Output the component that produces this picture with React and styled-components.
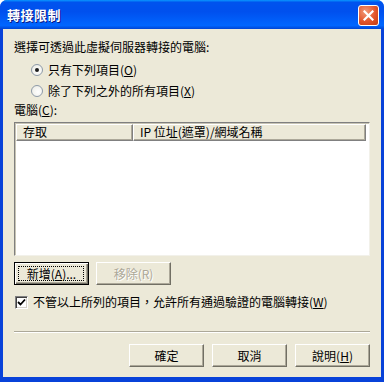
import React from 'react';
import styled, { createGlobalStyle } from 'styled-components';

const GlobalStyle = createGlobalStyle`
  html, body {
    margin: 0;
    padding: 0;
    background: #ffffff;
  }
`;

const cjk = `"Noto Sans CJK TC", "Noto Sans", sans-serif`;

const Window = styled.div`
  width: 384px;
  height: 382px;
  box-sizing: border-box;
  display: flex;
  flex-direction: column;
  background: linear-gradient(to right, #0831d9 0, #166aee 2px, #0a5ae8 3px);
  border-radius: 7px 7px 0 0;
  overflow: hidden;
  font-family: ${cjk};
  font-size: 12px;
  color: #000;
`;

const TitleBar = styled.div`
  height: 29px;
  flex: none;
  display: flex;
  align-items: center;
  padding: 0 5px 0 7px;
  background: linear-gradient(
    to bottom,
    #0997ff 0,
    #0053ee 8%,
    #0050ee 40%,
    #0066ff 88%,
    #0045d3 100%
  );
`;

const Title = styled.div`
  flex: 1;
  color: #fff;
  font-weight: bold;
  font-size: 13px;
  letter-spacing: 0.5px;
  text-shadow: 1px 1px 0 #0a1883;
`;

const CloseButton = styled.div`
  width: 21px;
  height: 21px;
  box-sizing: border-box;
  border: 1px solid #fff;
  border-radius: 3px;
  background: radial-gradient(circle at 35% 30%, #f29a7a 0, #e2552b 55%, #c23c12 100%);
  display: flex;
  align-items: center;
  justify-content: center;
  margin-top: 1px;
`;

const Frame = styled.div`
  flex: 1;
  display: flex;
  padding: 0 3px 5px 3px;
  background: #0842d9;
`;

const Client = styled.div`
  flex: 1;
  background: #ece9d8;
  display: flex;
  flex-direction: column;
  padding: 10px 11px 0 11px;
`;

const Line = styled.div`
  height: 16px;
  line-height: 16px;
  display: flex;
  align-items: center;
  margin-top: ${(p) => p.$mt || 0}px;
  margin-left: ${(p) => p.$ml || 0}px;
  white-space: nowrap;
`;

const Radio = styled.span`
  width: 12px;
  height: 12px;
  box-sizing: border-box;
  border-radius: 50%;
  border: 1px solid #8e9aa8;
  background: radial-gradient(circle at 60% 60%, #ffffff 0, #e9e9e1 100%);
  display: inline-flex;
  align-items: center;
  justify-content: center;
  margin-right: 5px;
  &::after {
    content: '';
    width: 4px;
    height: 4px;
    border-radius: 50%;
    background: ${(p) => (p.$checked ? '#1d1d1d' : 'transparent')};
  }
`;

const U = styled.span`
  text-decoration: underline;
  text-underline-offset: 1px;
`;

const ListBox = styled.div`
  margin-top: 4px;
  height: 134px;
  box-sizing: border-box;
  background: #fff;
  border-top: 1px solid #7f7f7f;
  border-left: 1px solid #7f7f7f;
  border-right: 1px solid #f2f1ea;
  border-bottom: 1px solid #f2f1ea;
  box-shadow: inset 1px 1px 0 #c7c4b4;
  padding: 1px 1px 0 1px;
`;

const Header = styled.div`
  display: flex;
  height: 17px;
  margin-right: 2px;
`;

const HeaderCell = styled.div`
  width: ${(p) => p.$w}px;
  flex: ${(p) => (p.$w ? 'none' : 1)};
  box-sizing: border-box;
  background: #ece9d8;
  border-top: 1px solid #fff;
  border-left: 1px solid #fff;
  border-right: 1px solid #808080;
  border-bottom: 1px solid #808080;
  box-shadow: inset -1px -1px 0 #aca899;
  padding-left: 6px;
  line-height: 14px;
  white-space: nowrap;
`;

const ButtonRow = styled.div`
  display: flex;
  gap: ${(p) => p.$gap}px;
  margin-top: ${(p) => p.$mt}px;
  justify-content: ${(p) => (p.$end ? 'flex-end' : 'flex-start')};
`;

const Button = styled.div`
  width: 75px;
  height: 23px;
  box-sizing: border-box;
  background: #ece9d8;
  border-top: 1px solid ${(p) => (p.$default ? '#000' : '#fff')};
  border-left: 1px solid ${(p) => (p.$default ? '#000' : '#fff')};
  border-right: 1px solid ${(p) => (p.$default ? '#000' : '#716f64')};
  border-bottom: 1px solid ${(p) => (p.$default ? '#000' : '#716f64')};
  box-shadow: ${(p) =>
    p.$default
      ? 'inset 1px 1px 0 #fff, inset -1px -1px 0 #716f64, inset -2px -2px 0 #aca899'
      : 'inset -1px -1px 0 #aca899'};
  display: flex;
  align-items: center;
  justify-content: center;
  color: ${(p) => (p.$disabled ? '#aca899' : '#000')};
  text-shadow: ${(p) => (p.$disabled ? '1px 1px 0 #fff' : 'none')};
  white-space: nowrap;
  position: relative;
`;

const Focus = styled.span`
  position: absolute;
  inset: 3px 4px 3px 3px;
  border: 1px dotted #000;
`;

const CheckBox = styled.span`
  width: 13px;
  height: 13px;
  box-sizing: border-box;
  background: #fff;
  border-top: 1px solid #808080;
  border-left: 1px solid #808080;
  border-right: 1px solid #fff;
  border-bottom: 1px solid #fff;
  box-shadow: inset 1px 1px 0 #404040, inset -1px -1px 0 #d4d0c8;
  display: inline-flex;
  align-items: center;
  justify-content: center;
  margin: 0 5px 0 1px;
`;

const Separator = styled.div`
  margin-top: 21px;
  height: 1px;
  background: #aca899;
  border-bottom: 1px solid #fff;
`;

export default function App() {
  return (
    <>
      <GlobalStyle />
      <Window>
        <TitleBar>
          <Title>轉接限制</Title>
          <CloseButton>
            <svg width="11" height="11" viewBox="0 0 11 11">
              <path d="M1.5 1.5 L9.5 9.5 M9.5 1.5 L1.5 9.5" stroke="#fff" strokeWidth="2.2" strokeLinecap="square" />
            </svg>
          </CloseButton>
        </TitleBar>
        <Frame>
          <Client>
            <Line>選擇可透過此虛擬伺服器轉接的電腦:</Line>
            <Line $mt={7} $ml={17}>
              <Radio $checked />
              只有下列項目(<U>O</U>)
            </Line>
            <Line $mt={5} $ml={17}>
              <Radio />
              除了下列之外的所有項目(<U>X</U>)
            </Line>
            <Line $mt={3}>
              電腦(<U>C</U>):
            </Line>
            <ListBox>
              <Header>
                <HeaderCell $w={117}>存取</HeaderCell>
                <HeaderCell>IP 位址(遮罩)/網域名稱</HeaderCell>
              </Header>
            </ListBox>
            <ButtonRow $gap={7} $mt={6}>
              <Button $default>
                <Focus />
                新增(<U>A</U>)...
              </Button>
              <Button $disabled>移除(R)</Button>
            </ButtonRow>
            <Line $mt={9}>
              <CheckBox>
                <svg width="9" height="9" viewBox="0 0 9 9">
                  <path d="M1 4 L3.5 6.5 L8 1.5" stroke="#000" strokeWidth="1.8" fill="none" />
                </svg>
              </CheckBox>
              不管以上所列的項目，允許所有通過驗證的電腦轉接(<U>W</U>)
            </Line>
            <Separator />
            <ButtonRow $gap={8} $mt={11} $end>
              <Button>確定</Button>
              <Button>取消</Button>
              <Button>
                說明(<U>H</U>)
              </Button>
            </ButtonRow>
          </Client>
        </Frame>
      </Window>
    </>
  );
}
